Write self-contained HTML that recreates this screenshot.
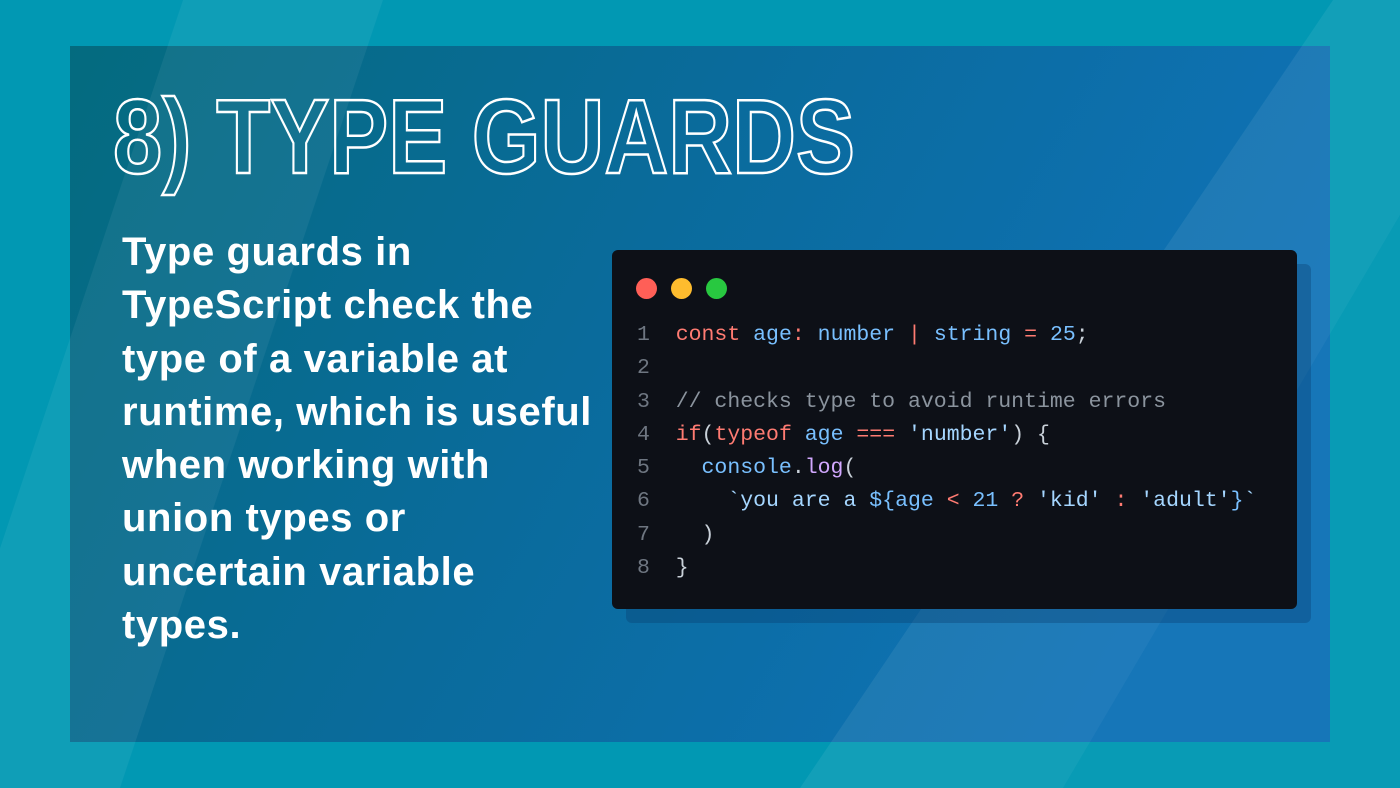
<!DOCTYPE html>
<html><head><meta charset="utf-8"><style>
html,body{margin:0;padding:0}
body{width:1400px;height:788px;position:relative;overflow:hidden;background:#0198b3;font-family:"Liberation Sans",sans-serif}
.bg{position:absolute;left:0;top:0}
.body{position:absolute;left:122px;top:226px;color:#fff;font-weight:bold;font-size:40px;line-height:53.3px;letter-spacing:0.6px}
.shadow{position:absolute;left:626px;top:264px;width:685px;height:359px;background:rgba(10,60,110,0.35);border-radius:6px}
.code{position:absolute;left:612px;top:250px;width:685px;height:359px;background:#0d1017;border-radius:6px}
.dot{position:absolute;top:278px;width:21px;height:21px;border-radius:50%}
pre{position:absolute;left:637px;top:319px;margin:0;font-family:"Liberation Mono","DejaVu Sans Mono",monospace;font-size:21.5px;line-height:33.3px;color:#c9d1d9}
.n{color:#6e7681}.r{color:#ff7b72}.b{color:#79c0ff}.s{color:#a5d6ff}.c{color:#8b949e}.p{color:#d2a8ff}
</style></head><body>
<svg class="bg" width="1400" height="788">
<defs><linearGradient id="g" x1="0" y1="0" x2="1" y2="0.3">
<stop offset="0" stop-color="#046b7f"/><stop offset="0.5" stop-color="#0a6b9c"/><stop offset="1" stop-color="#0f72b6"/></linearGradient></defs>
<rect x="70" y="46" width="1260" height="696" fill="url(#g)"/>
<polygon points="183,0 383,0 120,788 -80,788" fill="#ffffff" opacity="0.06"/>
<polygon points="1333,0 1400,0 1400,215 1063,788 800,788" fill="#ffffff" opacity="0.07"/>
<polygon points="1400,215 1400,788 1063,788" fill="#ffffff" opacity="0.03"/>
<text x="113" y="173" textLength="742" lengthAdjust="spacingAndGlyphs" font-family="Liberation Sans" font-weight="bold" font-size="106" fill="none" stroke="#fff" stroke-width="2.5">8) TYPE GUARDS</text>
</svg>
<div class="body">Type guards in<br>TypeScript check the<br>type of a variable at<br>runtime, which is useful<br>when working with<br>union types or<br>uncertain variable<br>types.</div>
<div class="shadow"></div>
<div class="code"></div>
<div class="dot" style="left:636px;background:#ff5f57"></div>
<div class="dot" style="left:671px;background:#febc2e"></div>
<div class="dot" style="left:706px;background:#28c840"></div>
<pre><span class="n">1</span>  <span class="r">const</span> <span class="b">age</span><span class="r">:</span> <span class="b">number</span> <span class="r">|</span> <span class="b">string</span> <span class="r">=</span> <span class="b">25</span>;
<span class="n">2</span>
<span class="n">3</span>  <span class="c">// checks type to avoid runtime errors</span>
<span class="n">4</span>  <span class="r">if</span>(<span class="r">typeof</span> <span class="b">age</span> <span class="r">===</span> <span class="s">'number'</span>) {
<span class="n">5</span>    <span class="b">console</span>.<span class="p">log</span>(
<span class="n">6</span>      <span class="s">`you are a </span><span class="b">${age</span> <span class="r">&lt;</span> <span class="b">21</span> <span class="r">?</span> <span class="s">'kid'</span> <span class="r">:</span> <span class="s">'adult'</span><span class="b">}</span><span class="s">`</span>
<span class="n">7</span>    )
<span class="n">8</span>  }</pre>
</body></html>
